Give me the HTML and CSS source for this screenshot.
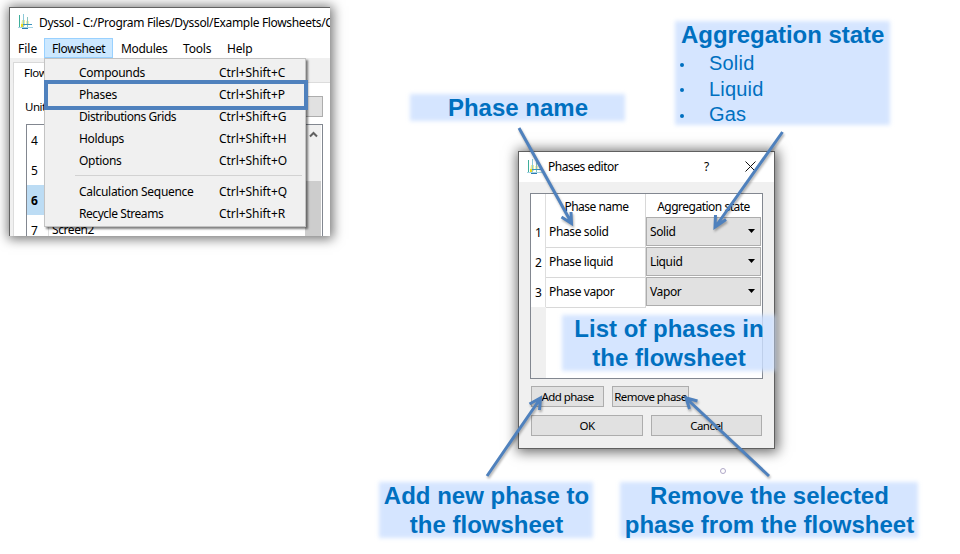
FILE: index.html
```html
<!DOCTYPE html>
<html lang="en">
<head>
<meta charset="utf-8">
<title>Dyssol phases editor</title>
<link rel="stylesheet" href="styles.css">
</head>
<body>
<svg class="defs" width="0" height="0">
  <symbol id="logo" viewBox="0 0 16 16">
    <path d="M4 6h3v6H3z" fill="#e9ee9a"/>
    <path d="M3 10h3v4H3z" fill="#f0dc1e"/>
    <path d="M8 7h3v3H8z" fill="#f3f3b4"/>
    <path d="M1.500 1V14" stroke="#3fae9b"/>
    <path d="M5.500 0V14" stroke="#8cc9d8"/>
    <path d="M9.500 3V14" stroke="#8cc4c0"/>
    <path d="M5 10.500H14" stroke="#3b93bd"/>
    <path d="M0 13.500H15" stroke="#a5d3e4"/>
    <path d="M4 14.500h6" stroke="#2c7bb0"/>
  </symbol>
</svg>
<main class="canvas">
  <section class="window main-window">
    <header class="titlebar"><svg class="logo"><use href="#logo"/></svg><span class="main-title">Dyssol - C:/Program Files/Dyssol/Example Flowsheets/C</span></header>
    <nav class="menubar">
      <span class="m-file">File</span><span class="m-flow">Flowsheet</span><span class="m-modules">Modules</span><span class="m-tools">Tools</span><span class="m-help">Help</span>
    </nav>
    <div class="content">
      <div class="tabs"><span class="tab">Flowsheet</span></div>
      <div class="pane">
        <div class="toolbar"><span>Units</span><span class="tool-button"></span></div>
        <div class="units">
          <div class="unit-list">
            <div class="unit"><b>4</b><span></span></div>
            <div class="unit"><b>5</b><span></span></div>
            <div class="unit selected"><b>6</b><span></span></div>
            <div class="unit last"><b>7</b><span>Screen2</span></div>
          </div>
          <div class="scrollbar">
            <svg width="9" height="7" viewBox="0 0 9 7"><path d="M1 5.500 4.500 2 8 5.500" fill="none" stroke="#606060" stroke-width="2"/></svg>
            <div class="thumb"></div>
          </div>
        </div>
      </div>
    </div>
  </section>

  <div class="menu">
    <div class="item"><span>Compounds</span><span class="key">Ctrl+Shift+C</span></div>
    <div class="item"><span>Phases</span><span class="key">Ctrl+Shift+P</span></div>
    <div class="item"><span class="tight">Distributions Grids</span><span class="key">Ctrl+Shift+G</span></div>
    <div class="item"><span>Holdups</span><span class="key">Ctrl+Shift+H</span></div>
    <div class="item"><span>Options</span><span class="key">Ctrl+Shift+O</span></div>
    <div class="separator"></div>
    <div class="item"><span>Calculation Sequence</span><span class="key">Ctrl+Shift+Q</span></div>
    <div class="item"><span class="tight">Recycle Streams</span><span class="key">Ctrl+Shift+R</span></div>
  </div>
  <div class="highlight"></div>

  <section class="window dialog">
    <header class="titlebar">
      <svg class="logo"><use href="#logo"/></svg><span class="dialog-title">Phases editor</span>
      <span class="help">?</span>
      <svg class="close" width="11" height="11" viewBox="0 0 11 11"><path d="M.5.5l10 10M10.500.5l-10 10" stroke="#111" fill="none"/></svg>
    </header>
    <div class="dialog-body">
      <div class="grid">
        <div class="row head"><span class="num"></span><span class="name">Phase name</span><span class="state">Aggregation state</span></div>
        <div class="row"><span class="num">1</span><span class="name">Phase solid</span><span class="combo">Solid<i></i></span></div>
        <div class="row"><span class="num">2</span><span class="name">Phase liquid</span><span class="combo">Liquid<i></i></span></div>
        <div class="row"><span class="num">3</span><span class="name">Phase vapor</span><span class="combo">Vapor<i></i></span></div>
        <div class="gutter"></div>
      </div>
      <div class="buttons"><span class="button add">Add phase</span><span class="button remove">Remove phase</span></div>
      <div class="buttons wide"><span class="button ok">OK</span><span class="button cancel">Cancel</span></div>
    </div>
  </section>

  <div class="callout c-name">Phase name</div>
  <div class="callout c-state">Aggregation state
    <ul><li>Solid</li><li>Liquid</li><li>Gas</li></ul>
  </div>
  <div class="callout c-list">List of phases in<br>the flowsheet</div>
  <div class="callout c-add">Add new phase to<br>the flowsheet</div>
  <div class="callout c-remove">Remove the selected<br>phase from the flowsheet</div>
  <div class="ring"></div>

  <svg class="arrows" width="960" height="554" viewBox="0 0 960 554">
    <path d="M519 128 571 222M561.500 217 571.500 223.500 571 212"/>
    <path d="M782.500 132 716 226M715.500 215 715 227 726 219.500"/>
    <path d="M487 476 540 399M529.500 404 540.500 398 539.500 410"/>
    <path d="M769 476 687 399M689.500 409 686 398 697.500 401"/>
  </svg>
</main>
</body>
</html>
```
FILE: styles.css
```css
* { box-sizing: border-box; }
body { margin: 0; background: #fff; overflow: hidden; }
.defs { position: absolute; }
.canvas { position: relative; width: 960px; height: 554px; overflow: hidden; font: 12px/16px "Noto Sans", "Open Sans", sans-serif; color: #000; }
.window { position: absolute; background: #f0f0f0; }
.titlebar { display: flex; background: #fff; }
.logo { width: 16px; height: 16px; flex: none; }

.main-window { left: 9px; top: 7px; width: 321px; height: 229px; border-left: 1px solid #626262; border-top: 1px solid #626262; overflow: hidden; box-shadow: 1px 1px 11px 2px rgba(0,0,0,.55); }
.main-window .titlebar { height: 30px; padding: 6px 0 0 8px; }
.main-title { margin-left: 5px; padding-top: 1px; white-space: nowrap; letter-spacing: -.33px; }
.menubar { display: flex; height: 20px; background: #fff; line-height: 22px; }
.menubar span { white-space: nowrap; }
.m-file { width: 34px; padding-left: 8px; }
.m-flow { width: 69px; padding-left: 7px; background: #cce8ff; border: 1px solid #99d1ff; line-height: 20px; letter-spacing: -.4px; }
.m-modules { width: 62px; padding-left: 8px; letter-spacing: -.3px; }
.m-tools { width: 44px; padding-left: 8px; letter-spacing: -.2px; }
.m-help { padding-left: 8px; letter-spacing: -.2px; }
.content { padding: 4px 0 0 3px; height: 180px; }
.tabs { height: 20px; }
.tab { position: relative; display: block; width: 70px; height: 21px; background: #fff; border: 1px solid #d9d9d9; border-bottom: 0; padding: 2px 0 0 10px; font-size: 11.5px; letter-spacing: -.3px; }
.pane { height: 156px; background: #fff; border-top: 1px solid #dcdcdc; border-left: 1px solid #dcdcdc; padding: 13px 7px 0 12px; }
.toolbar { display: flex; justify-content: space-between; height: 28px; font-size: 11.5px; line-height: 21px; letter-spacing: -.5px; }
.toolbar > span:first-child { margin-left: -1px; }
.tool-button { width: 60px; height: 21px; background: #e1e1e1; border: 1px solid #adadad; }
.units { display: flex; height: 130px; border: 1px solid #828790; }
.unit-list { flex: 1; }
.unit { display: flex; height: 30px; line-height: 31px; }
.unit b { width: 22px; padding-left: 4px; font-weight: 400; border-right: 1px solid #e0e0e0; }
.unit span { padding-left: 3px; line-height: 30px; letter-spacing: -.4px; }
.unit.selected b { background: #bcdcf4; font-weight: 700; }
.scrollbar { width: 17px; background: #f0f0f0; border-right: 1px solid #fff; }
.scrollbar svg { display: block; margin: 6px 0 0 4px; }
.thumb { width: 16px; height: 80px; margin-top: 43px; background: #cdcdcd; }

.menu { position: absolute; left: 44px; top: 58px; width: 262px; height: 169px; padding: 2px 0; border: 1px solid #c3c3c3; background: #f0f0f0; box-shadow: 2px 2px 2px rgba(0,0,0,.5); }
.item { display: grid; grid-template-columns: 140px 1fr; height: 22px; line-height: 24px; padding-left: 34px; white-space: nowrap; letter-spacing: -.3px; }
.item .tight { letter-spacing: -.45px; }
.item .key { letter-spacing: -.05px; }
.separator { height: 1px; margin: 4px 3px 4px 30px; background: #d2d2d2; }
.highlight { position: absolute; left: 44px; top: 80px; width: 264px; height: 30px; border: 4px solid #4f81bd; }

.dialog { left: 518px; top: 151px; width: 257px; height: 298px; border: 1px solid #606060; box-shadow: 1px 1px 12px 2px rgba(0,0,0,.6); }
.dialog .titlebar { height: 30px; padding: 7px 0 0 8px; }
.dialog-title { margin-left: 5px; width: 155px; letter-spacing: -.48px; }
.help { width: 43px; padding-left: 1px; }
.close { margin: 2px 0 0 -1px; }
.dialog-body { padding: 11px 11px 0; }
.grid { display: flex; flex-direction: column; height: 186px; border: 1px solid #828790; background: #fff; }
.row { display: grid; grid-template-columns: 15px 100px 115px; height: 30px; line-height: 30px; white-space: nowrap; letter-spacing: -.38px; }
.row.head { height: 23px; line-height: 25px; text-align: center; letter-spacing: -.5px; }
.num { border-right: 1px solid #dedede; padding-left: 4px; line-height: 31px; }
.name { border-right: 1px solid #d8d8d8; border-bottom: 1px solid #d8d8d8; padding-left: 3px; }
.head .name { border-bottom: 0; padding-left: 2px; }
.combo { display: flex; justify-content: space-between; height: 29px; padding: 0 5px 0 3px; line-height: 28px; background: #e1e1e1; border: 1px solid #adadad; }
.combo i { width: 7px; height: 4px; margin-top: 11px; background: #000; clip-path: polygon(0 0, 100% 0, 50% 100%); }
.gutter { width: 15px; flex: 1; background: #f0f0f0; }
.buttons { display: flex; gap: 8px; margin-top: 7px; padding-left: 1px; font-size: 11.5px; letter-spacing: -.55px; }
.buttons.wide { margin-top: 8px; }
.button { height: 21px; line-height: 20px; text-align: center; white-space: nowrap; background: #e1e1e1; border: 1px solid #adadad; }
.add { width: 73px; }
.remove { width: 77px; }
.ok { width: 112px; }
.cancel { width: 111px; }

.callout { position: absolute; z-index: 1; padding-left: 1px; font: 700 24px/29px "Liberation Sans", Arial, sans-serif; color: #0070c0; text-align: center; white-space: nowrap; }
.callout::before { content: ""; position: absolute; inset: 1px 0 0; background: rgba(204,223,255,.82); filter: blur(2px); z-index: -1; }
.c-name { left: 410px; top: 93px; width: 215px; height: 28px; }
.c-state { left: 675px; top: 20px; width: 215px; height: 105px; text-align: left; padding-left: 6px; letter-spacing: -.05px; }
.c-state ul { margin: 2px 0 0; padding: 0; list-style: none; font-size: 20px; font-weight: 400; line-height: 25.5px; letter-spacing: .2px; }
.c-state li { display: flex; align-items: center; }
.c-state li::before { content: ""; width: 4px; height: 4px; margin: 2px 25px 0 -1px; border-radius: 50%; background: #0070c0; }
.c-list { left: 562px; top: 314px; width: 213px; height: 57px; }
.c-add { left: 379px; top: 481px; width: 214px; height: 57px; }
.c-remove { left: 620px; top: 481px; width: 298px; height: 57px; }
.ring { position: absolute; left: 720px; top: 468px; width: 6px; height: 6px; border: 1px solid #b0a8c8; border-radius: 50%; }
.arrows { position: absolute; left: 0; top: 0; z-index: 2; fill: none; stroke: #4f81bd; stroke-width: 3; filter: drop-shadow(1px 2px 1px rgba(0,0,0,.3)); }
```
